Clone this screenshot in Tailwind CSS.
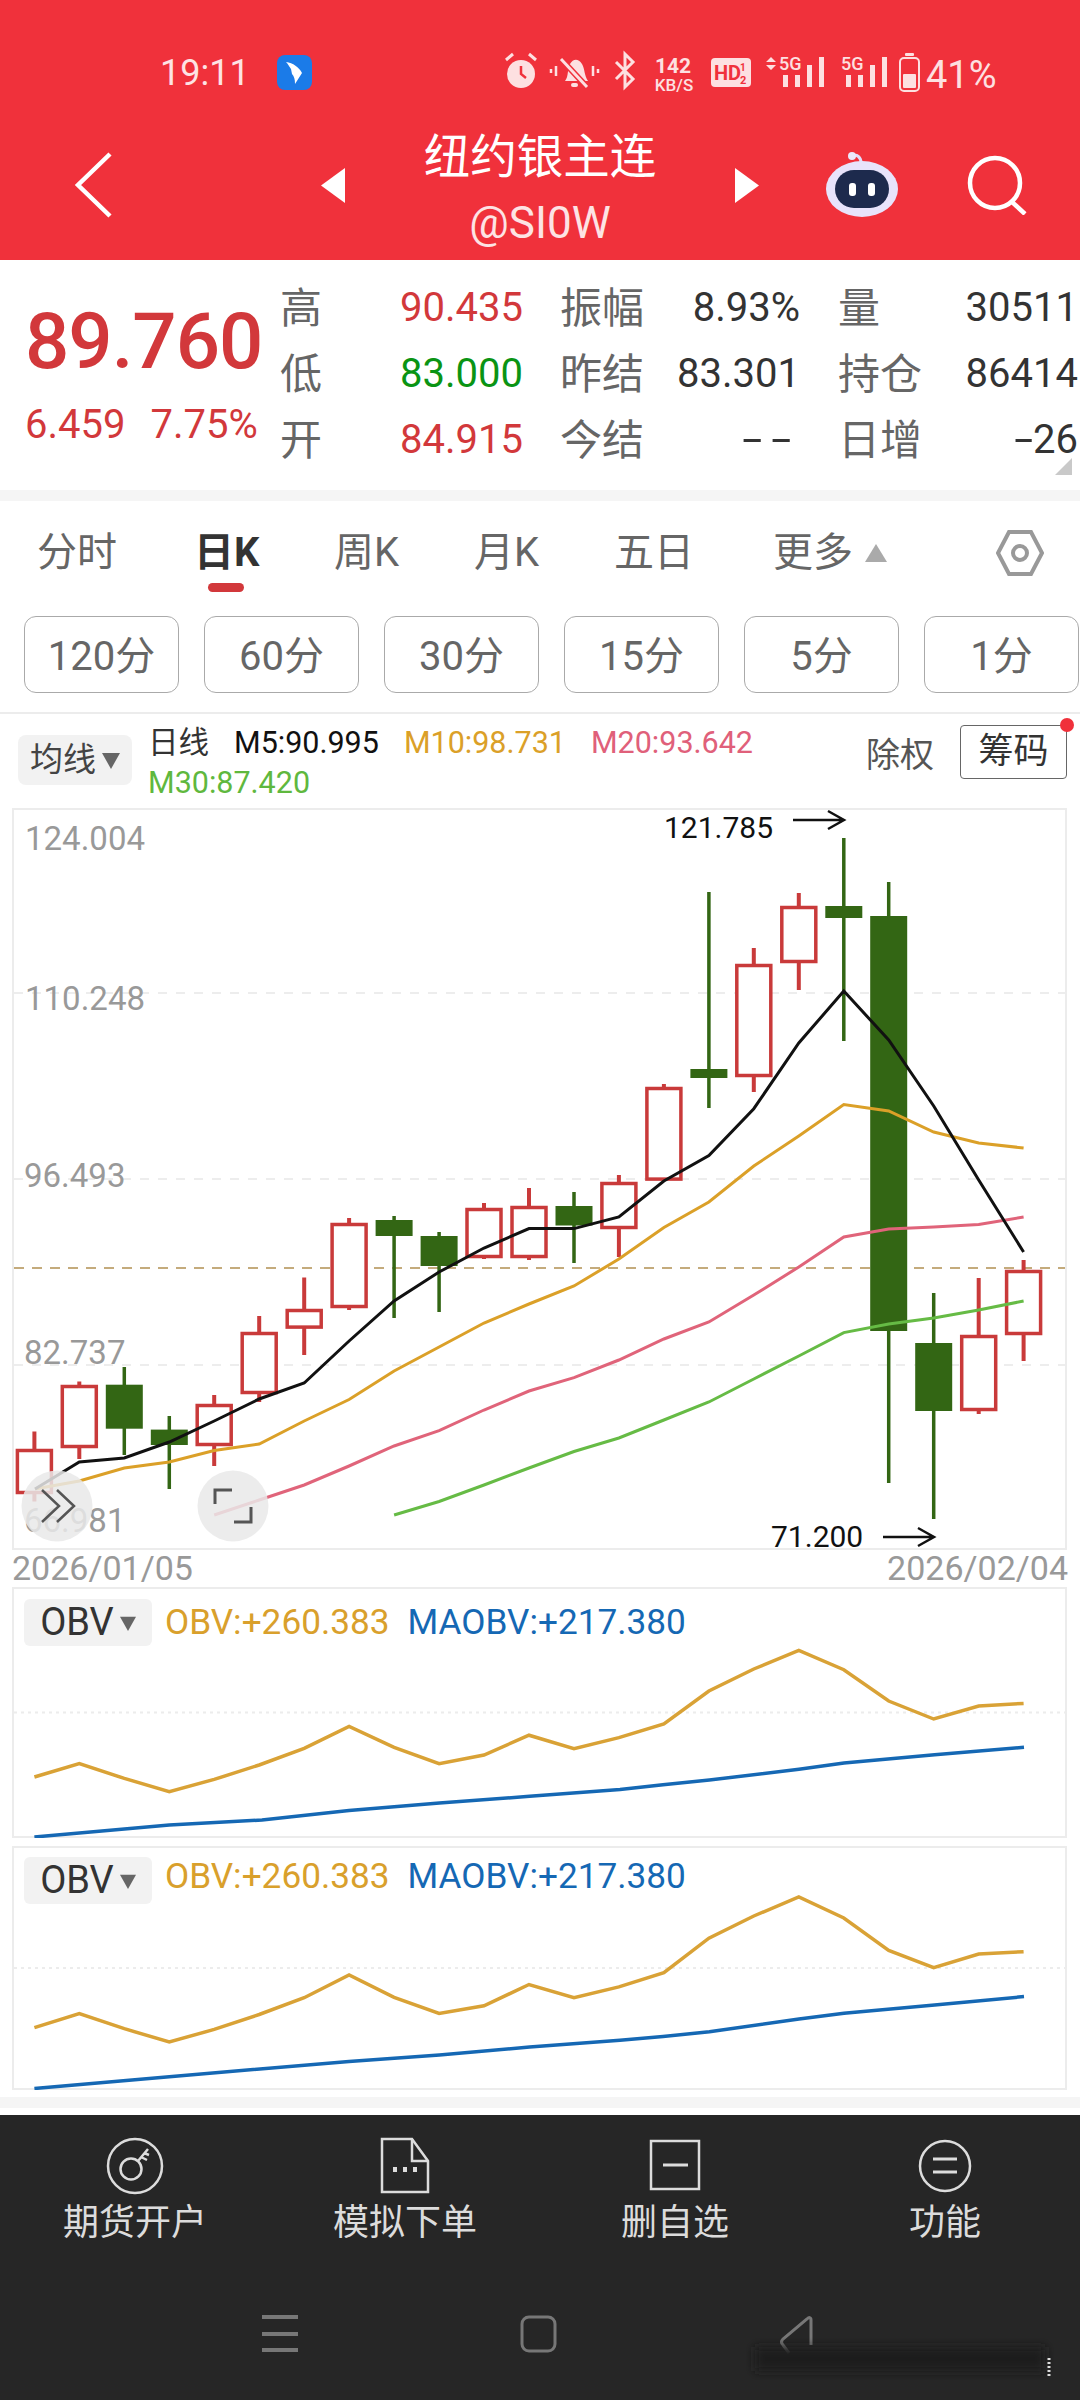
<!doctype html>
<html lang="en">
<head>
    <meta charset="UTF-8">
    <title>纽约银主连</title>
    <script src="https://cdn.jsdelivr.net/npm/@tailwindcss/browser@4"></script>
</head>
<body>
<div class="w-[1080px] h-[2400px] overflow-hidden bg-white font-['Roboto','Noto_Sans_CJK_SC',sans-serif]">

    <!-- red header -->
    <div class="h-[260px] bg-[#f0313b] text-white">
        <div class="h-[110px] flex items-start">
            <span class="ml-[160px] mt-[51px] text-[36px] leading-[44px] text-[#fde3e4]">19:11</span>
            <svg class="ml-[27px] mt-[55px] w-[35px] h-[35px]" viewBox="0 0 35 35">
                <rect width="35" height="35" rx="8" fill="#1b7be8"/>
                <path d="M9 7c7 1 13 5 16 11l-7 11c0-5-1-8-3-10l-1-5c-2-3-3-5-5-7z" fill="#fff"/>
            </svg>
            <svg class="ml-[193px] mt-[46px] w-[495px] h-[54px]" viewBox="505 46 495 54" fill="#fde0e1">
                <circle cx="521" cy="74" r="14"/>
                <path d="M521 66v8l5 4" stroke="#f0313b" stroke-width="2.5" fill="none"/>
                <path d="M506 60l7-6M536 60l-7-6" stroke="#fde0e1" stroke-width="3" fill="none"/>
                <path d="M565 81c4-5 2-12 5-17 3-5 8-6 12 0 3 5 2 11 6 17z"/>
                <rect x="571" y="83" width="7" height="4" rx="2"/>
                <path d="M561 59l26 28" stroke="#f0313b" stroke-width="6"/>
                <path d="M561 59l26 28" stroke="#fde0e1" stroke-width="3"/>
                <path d="M551 69v4M556 66v10M593 66v10M598 69v4" stroke="#fde0e1" stroke-width="2.5"/>
                <path d="M616 62l17 17-8 8V54l8 8-17 17" fill="none" stroke="#fde0e1" stroke-width="3"/>
                <text x="673" y="73" font-size="21" font-weight="700" text-anchor="middle">142</text>
                <text x="674" y="91" font-size="17" font-weight="500" text-anchor="middle">KB/S</text>
                <rect x="711" y="58" width="40" height="29" rx="4"/>
                <text x="714" y="80" font-size="20" font-weight="700" fill="#f0313b">HD</text>
                <text x="740" y="71" font-size="10" font-weight="700" fill="#f0313b">1</text>
                <text x="740" y="84" font-size="11" font-weight="700" fill="#f0313b">2</text>
                <path d="M771 57l5 5h-10zM771 70l5-5h-10z"/>
                <text x="779" y="70" font-size="18" font-weight="500">5G</text>
                <path d="M783 75h5v12h-5zM795 75h5v12h-5zM807 65h5v22h-5zM819 57h5v30h-5z"/>
                <text x="841" y="70" font-size="18" font-weight="500">5G</text>
                <path d="M846 75h5v12h-5zM858 75h5v12h-5zM870 65h5v22h-5zM882 57h5v30h-5z"/>
                <rect x="900" y="58" width="19" height="33" rx="4" fill="none" stroke="#fde0e1" stroke-width="2"/>
                <rect x="905" y="53" width="9" height="3" rx="1"/>
                <rect x="903" y="74" width="13" height="14" rx="1"/>
                <text x="926" y="88" font-size="38">41%</text>
            </svg>
        </div>
        <div class="h-[150px] flex items-center">
            <svg class="ml-[74px] w-[40px] h-[68px]" viewBox="0 0 40 68" fill="none" stroke="#fff" stroke-width="4.5">
                <path d="M36 3L4 34l32 31"/>
            </svg>
            <svg class="ml-[207px] w-[24px] h-[35px]" viewBox="0 0 24 35" fill="#fff"><path d="M24 0v35L0 17.500z"/></svg>
            <div class="w-[390px] mt-[10px] flex flex-col items-center">
                <span class="text-[46.500px] leading-[66px]">纽约银主连</span>
                <span class="text-[44px] leading-[66px] text-[#fde3e4]">@SI0W</span>
            </div>
            <svg class="w-[24px] h-[35px]" viewBox="0 0 24 35" fill="#fff"><path d="M0 0v35L24 17.500z"/></svg>
            <svg class="ml-[67px] w-[72px] h-[70px]" viewBox="825 150 72 70">
                <path d="M851 156c5-2 9 1 9 7" fill="none" stroke="#e3defa" stroke-width="3"/>
                <circle cx="851" cy="156" r="4" fill="#ece8fb"/>
                <ellipse cx="861" cy="189" rx="36" ry="28" fill="#e8e3fb"/>
                <rect x="834" y="170" width="54" height="38" rx="19" fill="#1d2a4d"/>
                <rect x="848" y="183" width="7" height="13" rx="3" fill="#fff"/>
                <rect x="867" y="183" width="7" height="13" rx="3" fill="#fff"/>
            </svg>
            <svg class="ml-[69px] w-[60px] h-[60px]" viewBox="0 0 60 60" fill="none" stroke="#fff" stroke-width="4.500">
                <circle cx="28" cy="28" r="25"/>
                <path d="M44 46l14 13"/>
            </svg>
        </div>
    </div>

    <!-- quote block -->
    <div class="h-[230px] relative flex">
        <div class="w-[280px] pl-[25px] flex flex-col">
            <span class="mt-[36px] text-[78px] leading-[92px] font-medium tracking-[-1px] text-[#d2383b]">89.760</span>
            <div class="mt-[12px] flex gap-[25px] text-[40px] leading-[50px] text-[#d2383b]">
                <span>6.459</span><span>7.75%</span>
            </div>
        </div>
        <div class="pt-[15px] grid grid-cols-[120px_121px_39px_100px_140px_38px_100px_140px] grid-rows-[66px_66px_66px] items-center text-[40px]">
            <span class="text-[42px] text-[#666]">高</span><span class="text-right text-[#d2383b]">90.435</span><span></span><span class="text-[42px] text-[#666]">振幅</span><span class="text-right text-[#333]">8.93%</span><span></span><span class="text-[42px] text-[#666]">量</span><span class="text-right text-[#333]">30511</span>
            <span class="text-[42px] text-[#666]">低</span><span class="text-right text-[#0a9414]">83.000</span><span></span><span class="text-[42px] text-[#666]">昨结</span><span class="text-right text-[#333]">83.301</span><span></span><span class="text-[42px] text-[#666]">持仓</span><span class="text-right text-[#333]">86414</span>
            <span class="text-[42px] text-[#666]">开</span><span class="text-right text-[#d2383b]">84.915</span><span></span><span class="text-[42px] text-[#666]">今结</span><span class="text-right text-[#333]"><span class="inline-block origin-right scale-x-[1.8] tracking-[5px]">--</span></span><span></span><span class="text-[42px] text-[#666]">日增</span><span class="text-right text-[#333]"><span class="inline-block origin-right scale-x-[1.7]">-</span>26</span>
        </div>
        <svg class="absolute left-[1055px] top-[198px] w-[17px] h-[17px]" viewBox="0 0 17 17" fill="#c9c9c9"><path d="M17 0v17H0z"/></svg>
    </div>
    <div class="h-[11px] bg-[#f5f5f5]"></div>

    <!-- period tabs -->
    <div class="h-[103px] pl-[37px] grid grid-cols-[157px_140px_140px_140px_159px_223px_auto] items-center text-[40px] text-[#666]">
        <span>分时</span>
        <span class="relative font-bold text-[#333]">日K<span class="absolute left-[14px] top-[60px] w-[36px] h-[9px] rounded-full bg-[#d2383b]"></span></span>
        <span>周K</span>
        <span>月K</span>
        <span>五日</span>
        <span class="flex items-center gap-[12px]">更多<svg class="w-[22px] h-[18px]" viewBox="0 0 22 18" fill="#aaa"><path d="M11 0l11 18H0z"/></svg></span>
        <svg class="w-[48px] h-[46px]" viewBox="0 0 48 46" fill="none" stroke="#999" stroke-width="4">
            <path d="M13 2h22l11 21-11 21H13L2 23z"/>
            <circle cx="24" cy="23" r="7"/>
        </svg>
    </div>
    <div class="mt-[12px] pl-[24px] flex gap-[25px] text-[40px] text-[#666]">
        <span class="w-[155px] h-[77px] shrink-0 pt-[4px] rounded-[12px] border border-[#aaa] flex items-center justify-center">120分</span>
        <span class="w-[155px] h-[77px] shrink-0 pt-[4px] rounded-[12px] border border-[#aaa] flex items-center justify-center">60分</span>
        <span class="w-[155px] h-[77px] shrink-0 pt-[4px] rounded-[12px] border border-[#aaa] flex items-center justify-center">30分</span>
        <span class="w-[155px] h-[77px] shrink-0 pt-[4px] rounded-[12px] border border-[#aaa] flex items-center justify-center">15分</span>
        <span class="w-[155px] h-[77px] shrink-0 pt-[4px] rounded-[12px] border border-[#aaa] flex items-center justify-center">5分</span>
        <span class="w-[155px] h-[77px] shrink-0 pt-[4px] rounded-[12px] border border-[#aaa] flex items-center justify-center">1分</span>
    </div>
    <div class="mt-[19px] h-[2px] bg-[#ececec]"></div>

    <!-- MA legend -->
    <div class="h-[94px] flex items-start">
        <div class="ml-[18px] mt-[21px] w-[114px] h-[50px] shrink-0 rounded-[8px] bg-[#f2f2f2] flex items-center justify-center gap-[6px] text-[33px] text-[#444]">
            均线<svg class="w-[18px] h-[18px]" viewBox="0 0 18 18" fill="#666"><path d="M0 2h18L9 18z"/></svg>
        </div>
        <div class="ml-[16px] mt-[9px] w-[640px] shrink-0 flex flex-wrap gap-x-[25px] text-[30.500px] leading-[40px]">
            <span class="text-[#333]">日线</span>
            <span class="text-[#111]">M5:90.995</span>
            <span class="text-[#dba028]">M10:98.731</span>
            <span class="text-[#e0607a]">M20:93.642</span>
            <span class="text-[#5fb83e]">M30:87.420</span>
        </div>
        <span class="ml-[78px] mt-[20px] text-[34px] leading-[42px] text-[#555]">除权</span>
        <div class="ml-[26px] mt-[11px] relative w-[107px] h-[54px] rounded-[4px] border border-[#666] flex items-center justify-center text-[35px] text-[#333]">
            筹码<span class="absolute left-[99px] top-[-8px] w-[14px] h-[14px] rounded-full bg-[#f0313b]"></span>
        </div>
    </div>

    <!-- k-line chart -->
    <div class="ml-[12px] w-[1055px] h-[742px] relative border-2 border-[#ececec]">
        <svg class="absolute left-[-2px] top-[-2px] w-[1055px] h-[752px]" viewBox="12 808 1055 752" fill="none">
            <path d="M14 993H1065M14 1179H1065M14 1365H1065" stroke="#ededed" stroke-width="2" stroke-dasharray="9 9"/>
            <g font-size="33" fill="#999">
                <text x="25" y="850">124.004</text>
                <text x="25" y="1010">110.248</text>
                <text x="24" y="1187">96.493</text>
                <text x="24" y="1364">82.737</text>
                <text x="24" y="1532">66.981</text>
            </g>
            <path d="M14 1268H1065" stroke="#c4ab7c" stroke-width="2" stroke-dasharray="10 8"/>
            <path stroke="#c93a3a" stroke-width="4" d="M34.400 1431.600V1501.500M79.300 1381.600V1459M214.200 1395V1466M259.200 1316V1402M304.200 1277.500V1355M349.100 1218V1310M484 1203V1259M529 1188V1260M618.900 1175V1257M663.900 1084V1181M753.800 948V1092M798.800 893V990M978.700 1278V1414M1023.600 1260V1361"/>
            <g fill="#fff" stroke="#c93a3a" stroke-width="3.500">
                <rect x="17.400" y="1450.500" width="34" height="42"/>
                <rect x="62.300" y="1386.500" width="34" height="60"/>
                <rect x="197.200" y="1405.500" width="34" height="39"/>
                <rect x="242.200" y="1333.500" width="34" height="59"/>
                <rect x="287.200" y="1310.500" width="34" height="16.600"/>
                <rect x="332.100" y="1224.500" width="34" height="82"/>
                <rect x="467" y="1209.500" width="34" height="47"/>
                <rect x="512" y="1207.500" width="34" height="49"/>
                <rect x="601.900" y="1183.500" width="34" height="44"/>
                <rect x="646.900" y="1088.500" width="34" height="90.600"/>
                <rect x="736.800" y="965.500" width="34" height="110"/>
                <rect x="781.800" y="907.500" width="34" height="54"/>
                <rect x="961.700" y="1336.500" width="34" height="73"/>
                <rect x="1006.600" y="1271.500" width="34" height="62"/>
            </g>
            <path stroke="#336614" stroke-width="3.500" d="M124.300 1367V1455M169.300 1416V1489M394.100 1216V1318M439.100 1232V1312M574 1192V1263M708.900 892V1108M843.800 838V1041M888.700 882V1483M933.700 1293V1519"/>
            <g fill="#336614">
                <rect x="105.800" y="1384.700" width="37" height="44"/>
                <rect x="150.800" y="1429.600" width="37" height="15.400"/>
                <rect x="375.600" y="1220" width="37" height="16"/>
                <rect x="420.600" y="1236" width="37" height="30"/>
                <rect x="555.500" y="1206" width="37" height="19.500"/>
                <rect x="690.400" y="1069" width="37" height="9"/>
                <rect x="825.300" y="906" width="37" height="12"/>
                <rect x="870.200" y="916" width="37" height="415"/>
                <rect x="915.200" y="1343" width="37" height="68"/>
            </g>
            <g stroke-width="3">
                <polyline stroke="#66bb45" points="394.100,1515 439.100,1501.500 484,1485 529,1468 574,1451.500 618.900,1438 663.900,1420 708.900,1402 753.800,1379 798.800,1356 843.800,1332.600 888.700,1324 933.700,1318 978.700,1310 1023.600,1301"/>
                <polyline stroke="#e0647a" points="214.200,1515 259.200,1500 304.200,1485 349.100,1466 394.100,1446 439.100,1430.600 484,1410 529,1391 574,1377.600 618.900,1360 663.900,1339 708.900,1322 753.800,1295 798.800,1267 843.800,1237 888.700,1229 933.700,1227 978.700,1224.500 1023.600,1217"/>
                <polyline stroke="#dba028" points="35,1489 79.300,1481 124.300,1468 169.300,1462 214.200,1450.500 259.200,1444 304.200,1421 349.100,1399.500 394.100,1371 439.100,1347 484,1323 529,1304 574,1286 618.900,1259 663.900,1227.500 708.900,1202 753.800,1166 798.800,1136 843.800,1104.600 888.700,1111 933.700,1132 978.700,1143 1023.600,1148"/>
                <polyline stroke="#111" points="35,1489 79.300,1462 124.300,1458 169.300,1442 214.200,1421 259.200,1399 304.200,1383 349.100,1341 394.100,1301 439.100,1272 484,1248 529,1228.600 574,1228.600 618.900,1217 663.900,1181 708.900,1155.600 753.800,1108.700 798.800,1043 843.800,991 888.700,1040 933.700,1106 978.700,1180 1023.600,1252"/>
            </g>
            <text x="664" y="838" font-size="30" fill="#111">121.785</text>
            <path d="M793 820h51M828 811l16 9-16 9" stroke="#111" stroke-width="2.500"/>
            <text x="771" y="1547" font-size="30" fill="#111">71.200</text>
            <path d="M883 1537h51M918 1528l16 9-16 9" stroke="#111" stroke-width="2.500"/>
            <circle cx="57" cy="1506" r="35.500" fill="#e9e9e9" fill-opacity="0.85"/>
            <circle cx="233" cy="1506" r="35.500" fill="#e9e9e9" fill-opacity="0.85"/>
            <path d="M42 1490l17 16-17 16M57 1490l17 16-17 16" stroke="#555" stroke-width="2.500"/>
            <path d="M215 1504v-14h17M234 1522h17v-15" stroke="#555" stroke-width="3"/>
        </svg>
    </div>
    <div class="h-[37px] px-[12px] flex items-center justify-between text-[34px] text-[#999]">
        <span>2026/01/05</span><span>2026/02/04</span>
    </div>

    <!-- OBV panels -->
    <div class="ml-[12px] w-[1055px] h-[251px] relative border-2 border-[#ececec] pl-[10px] pt-[10px] flex items-start">
        <div class="w-[128px] h-[47px] rounded-[6px] bg-[#f2f2f2] flex items-center justify-center gap-[6px] text-[38px] text-[#333]">
            OBV<svg class="w-[16px] h-[16px]" viewBox="0 0 18 18" fill="#666"><path d="M0 2h18L9 18z"/></svg>
        </div>
        <span class="ml-[13px] text-[35.200px] leading-[46px] text-[#d9a02c]">OBV:+260.383</span>
        <span class="ml-[18px] text-[35.200px] leading-[46px] text-[#1568b4]">MAOBV:+217.380</span>
        <svg class="absolute left-[-2px] top-[-2px] w-[1055px] h-[251px]" viewBox="12 1587 1055 251" fill="none">
            <path d="M14 1712.500H1065" stroke="#ececec" stroke-width="2" stroke-dasharray="3 4"/>
            <polyline stroke="#d9a236" stroke-width="3.500" points="34.400,1777 79.300,1763.600 124.300,1778.400 169.300,1791.600 214.200,1779.400 259.200,1765 304.200,1748.400 349.100,1726.400 394.100,1747.300 439.100,1763.600 484,1755 529,1735.200 574,1748.700 618.900,1737.600 663.900,1724 708.900,1691 753.800,1669 798.800,1650.400 843.800,1669.700 888.700,1701 933.700,1719 978.700,1706 1023.600,1703.400"/>
            <polyline stroke="#1568b4" stroke-width="3.500" points="34.400,1837 169.300,1825 262,1820 349,1810.500 439.400,1803 529.600,1796.300 620,1789.600 663,1784.800 709.400,1780 799,1769.300 844,1763 934.600,1754.800 1024,1747.300"/>
        </svg>
    </div>
    <div class="mt-[8px] ml-[12px] w-[1055px] h-[244px] relative border-2 border-[#ececec] pl-[10px] pt-[9px] flex items-start">
        <div class="w-[128px] h-[47px] rounded-[6px] bg-[#f2f2f2] flex items-center justify-center gap-[6px] text-[38px] text-[#333]">
            OBV<svg class="w-[16px] h-[16px]" viewBox="0 0 18 18" fill="#666"><path d="M0 2h18L9 18z"/></svg>
        </div>
        <span class="ml-[13px] mt-[-4px] text-[35.200px] leading-[46px] text-[#d9a02c]">OBV:+260.383</span>
        <span class="ml-[18px] mt-[-4px] text-[35.200px] leading-[46px] text-[#1568b4]">MAOBV:+217.380</span>
        <svg class="absolute left-[-2px] top-[-2px] w-[1055px] h-[244px]" viewBox="12 1846 1055 244" fill="none">
            <path d="M14 1968H1065" stroke="#ececec" stroke-width="2" stroke-dasharray="3 4"/>
            <polyline stroke="#d9a236" stroke-width="3.500" points="34.400,2027.700 79.300,2013.500 124.300,2028.700 169.300,2042 214.200,2029.400 259.200,2014.500 304.200,1997.700 349.100,1975 394.100,1997.300 439.100,2013.500 484,2005.800 529,1984.500 574,1997.700 618.900,1986.900 663.900,1972.700 708.900,1938.200 753.800,1916 798.800,1897 843.800,1918 888.700,1950.400 933.700,1967.600 978.700,1954 1023.600,1951.700"/>
            <polyline stroke="#1568b4" stroke-width="3.500" points="34.400,2088.500 169.300,2076.700 349,2061.500 439.400,2055 529.600,2047 620,2040.200 663,2036.500 709.400,2031.800 799,2019 844,2013.200 934.600,2005 1024,1996.600"/>
        </svg>
    </div>
    <div class="mt-[7px] h-[11px] bg-[#f5f5f5]"></div>
    <div class="h-[7px]"></div>

    <!-- bottom bar -->
    <div class="h-[285px] bg-[#262626]">
        <div class="pt-[22px] grid grid-cols-4 text-[36px] leading-[44px] text-[#dcdcdc]">
            <div class="flex flex-col items-center gap-[6px]">
                <svg class="w-[58px] h-[58px]" viewBox="0 0 58 58" fill="none" stroke="#dcdcdc" stroke-width="2.500">
                    <circle cx="29" cy="29" r="27"/>
                    <circle cx="25" cy="32" r="10.500"/>
                    <path d="M32 24l10-12M35 20l6 3M38 16l5 2"/>
                </svg>
                <span>期货开户</span>
            </div>
            <div class="flex flex-col items-center gap-[6px]">
                <svg class="w-[58px] h-[58px]" viewBox="0 0 58 58" fill="none" stroke="#dcdcdc" stroke-width="2.500">
                    <path d="M6 2h30l16 22v31H6z"/>
                    <path d="M36 2v22h16"/>
                    <path d="M19 30v5M29 30v5M39 30v5" stroke-width="4"/>
                </svg>
                <span>模拟下单</span>
            </div>
            <div class="flex flex-col items-center gap-[6px]">
                <svg class="w-[58px] h-[58px]" viewBox="0 0 58 58" fill="none" stroke="#dcdcdc" stroke-width="2.500">
                    <rect x="5" y="4" width="48" height="48"/>
                    <path d="M17 28h25" stroke-width="3"/>
                </svg>
                <span>删自选</span>
            </div>
            <div class="flex flex-col items-center gap-[6px]">
                <svg class="w-[58px] h-[58px]" viewBox="0 0 58 58" fill="none" stroke="#dcdcdc" stroke-width="2.500">
                    <circle cx="29" cy="29" r="25"/>
                    <path d="M17 22h24M17 35h24" stroke-width="3"/>
                </svg>
                <span>功能</span>
            </div>
        </div>
        <svg class="w-[1080px] h-[155px]" viewBox="0 2245 1080 155" fill="none">
            <defs><filter id="smudge" x="-10%" y="-50%" width="120%" height="200%"><feGaussianBlur stdDeviation="5"/></filter></defs>
            <path d="M262 2317h36M262 2334h36M262 2350h36" stroke="#777" stroke-width="4"/>
            <rect x="522" y="2317" width="33" height="34" rx="7" stroke="#777" stroke-width="3"/>
            <path d="M811 2345v-25c0-3-2-3-4-1l-24 20c-2 2-2 4 0 6l6 8" stroke="#777" stroke-width="3"/>
            <rect x="755" y="2347" width="290" height="24" fill="#1f1f1f" filter="url(#smudge)"/>
            <path d="M1049 2358v18" stroke="#ddd" stroke-width="3" stroke-dasharray="2 2"/>
        </svg>
    </div>
</div>
</body>
</html>
